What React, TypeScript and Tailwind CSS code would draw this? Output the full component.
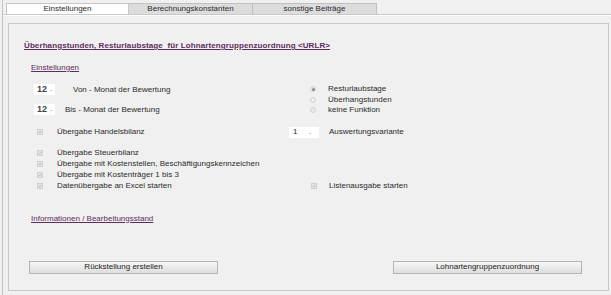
import React from 'react';

const Check: React.FC = () => (
  <span className="w-[6px] h-[6px] border border-[#cfcfcf] bg-[#e4e4e4] flex items-center justify-center">
    <svg viewBox="0 0 6 6" className="w-[6px] h-[6px]">
      <path d="M1.2 3 L2.5 4.3 L4.8 1.6" stroke="#9a9a9a" strokeWidth="0.9" fill="none" />
    </svg>
  </span>
);

const Radio: React.FC<{ on?: boolean }> = ({ on }) => (
  <span className="w-[6px] h-[6px] rounded-full border border-[#d2d2d2] bg-[#ececec] flex items-center justify-center">
    {on && <span className="w-[3px] h-[3px] rounded-full bg-[#8a8a8a]" />}
  </span>
);

const CheckRow: React.FC<{ label: string }> = ({ label }) => (
  <div className="h-[11px] flex items-center">
    <span className="w-[21px] flex pl-[1px]">
      <Check />
    </span>
    <span>{label}</span>
  </div>
);

const MonthBox: React.FC = () => (
  <span className="w-[21px] h-[11px] bg-white flex items-center pl-[3px] gap-[3px]">
    <span className="text-[9px] font-bold text-[#444]">12</span>
    <span className="text-[7px] text-[#999]">-</span>
  </span>
);

const SoftButton: React.FC<{ label: string }> = ({ label }) => (
  <button className="w-[189px] h-[13px] border border-[#b4b4b4] bg-gradient-to-b from-[#f7f7f7] to-[#dedede] text-[8px] text-[#222] flex items-center justify-center leading-none">
    {label}
  </button>
);

export default function App() {
  return (
    <div className="w-[611px] h-[295px] bg-[#f0f0f0] overflow-hidden pl-[2px] text-[8px] text-[#2a2a2a] leading-none" style={{ fontFamily: '"Liberation Sans", Arial, sans-serif' }}>
      <div className="h-full border-l border-[#c4c4c4] flex flex-col">
        {/* Tabs */}
        <div className="pt-[3px] border-b border-[#c9c9c9]">
          <div className="flex pl-[3px] h-[11px]">
            <div className="w-[123px] bg-white border border-[#c6c6c6] border-b-0 flex items-center justify-center">Einstellungen</div>
            <div className="w-[124px] bg-[#dcdcdc] border border-[#c0c0c0] border-b-0 border-l-0 flex items-center justify-center">Berechnungskonstanten</div>
            <div className="w-[124px] bg-[#dcdcdc] border border-[#c0c0c0] border-b-0 border-l-0 flex items-center justify-center">sonstige Beiträge</div>
          </div>
        </div>
        <div className="h-[1px] bg-white" />

        {/* Panel */}
        <div className="ml-[5px] mr-[2px] mt-[7px] h-[268px] border border-[#c8c8c8] flex flex-col">
          <div className="mt-[17px] ml-[15px] h-[10px] flex items-center font-bold tracking-[0.1px] text-[#5e2d5e] underline underline-offset-[1px]">
            Überhangstunden, Resturlaubstage&nbsp; für Lohnartengruppenzuordnung &lt;URLR&gt;
          </div>
          <div className="mt-[12px] ml-[22px] h-[10px] flex items-center text-[#5e2d5e] underline underline-offset-[1px]">
            Einstellungen
          </div>

          <div className="ml-[25px] flex flex-col">
            {/* Month / radio block */}
            <div className="mt-[11px] flex">
              <div className="w-[255px] flex flex-col gap-[9px]">
                <div className="h-[11px] flex items-center">
                  <MonthBox />
                  <span className="ml-[18px]">Von - Monat der Bewertung</span>
                </div>
                <div className="h-[11px] flex items-center">
                  <MonthBox />
                  <span className="ml-[10px]">Bis - Monat der Bewertung</span>
                </div>
              </div>
              <div className="flex flex-col pl-[21px]">
                <div className="h-[10.5px] flex items-center"><span className="w-[18px] flex"><Radio on /></span>Resturlaubstage</div>
                <div className="h-[10.5px] flex items-center"><span className="w-[18px] flex"><Radio /></span>Überhangstunden</div>
                <div className="h-[10.5px] flex items-center"><span className="w-[18px] flex"><Radio /></span>keine Funktion</div>
              </div>
            </div>

            {/* Handelsbilanz row */}
            <div className="mt-[11px] flex">
              <div className="w-[255px] pl-[2px]">
                <CheckRow label="Übergabe Handelsbilanz" />
              </div>
              <div className="flex items-center h-[11px]">
                <span className="w-[30px] h-[11px] bg-white flex items-center pl-[4px]">
                  <span className="w-[16px]">1</span>
                  <span className="text-[7px] text-[#999]">-</span>
                </span>
                <span className="ml-[10px]">Auswertungsvariante</span>
              </div>
            </div>

            {/* Checkbox block */}
            <div className="mt-[10px] flex">
              <div className="w-[277px] pl-[2px] flex flex-col">
                <CheckRow label="Übergabe Steuerbilanz" />
                <CheckRow label="Übergabe mit Kostenstellen, Beschäftigungskennzeichen" />
                <CheckRow label="Übergabe mit Kostenträger 1 bis 3" />
                <CheckRow label="Datenübergabe an Excel starten" />
              </div>
              <div className="flex flex-col pt-[33px]">
                <div className="h-[11px] flex items-center">
                  <span className="w-[18px] flex"><Check /></span>
                  Listenausgabe starten
                </div>
              </div>
            </div>
          </div>

          <div className="mt-[22px] ml-[22px] h-[10px] flex items-center text-[#5e2d5e] underline underline-offset-[1px]">
            Informationen / Bearbeitungsstand
          </div>

          <div className="mt-[37px] ml-[20px] flex">
            <SoftButton label="Rückstellung erstellen" />
            <div className="ml-[175px]">
              <SoftButton label="Lohnartengruppenzuordnung" />
            </div>
          </div>
        </div>
      </div>
    </div>
  );
}
